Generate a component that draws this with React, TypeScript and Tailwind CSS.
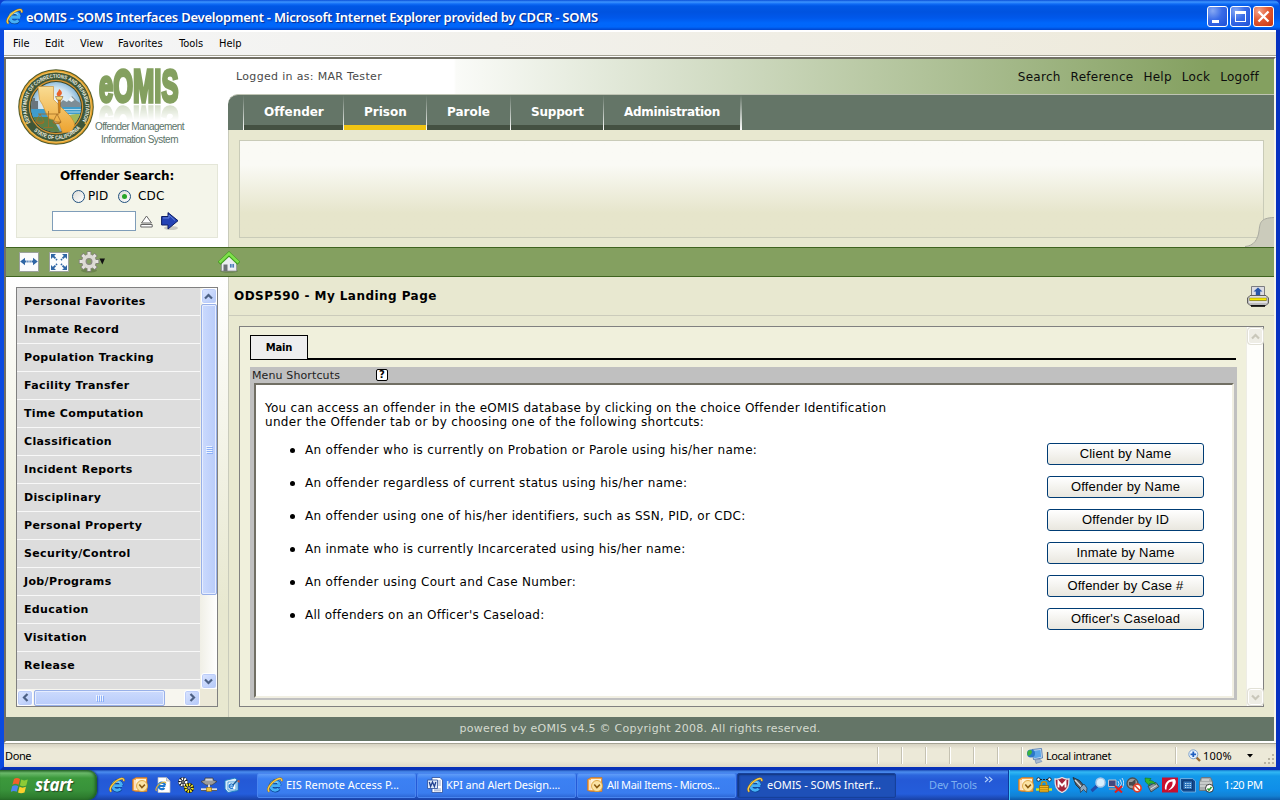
import type { ReactNode } from "react";

const VERDANA = "font-['DejaVu_Sans',sans-serif]";
const TAHOMA = "font-['DejaVu_Sans_Condensed','Noto_Sans',sans-serif]";
const NOTO = "font-['Noto_Sans',sans-serif]";
const ARIAL = "font-['Liberation_Sans',sans-serif]";

/* ---------- icons ---------- */

function IeIcon({ className = "size-4" }: { className?: string }) {
  return (
    <svg viewBox="0 0 16 16" className={`shrink-0 ${className}`}>
      <path d="M13 8.700H5M12.600 8.400A4.500 4.500 0 1 0 11.800 11.500" fill="none" stroke="#0b4597" strokeWidth="4" />
      <path d="M13.200 8.600H5M12.600 8.200A4.500 4.500 0 1 0 11.600 11.600" fill="none" stroke="#46b0f6" strokeWidth="2.900" />
      <path d="M4.600 7.200C5.600 5 9.500 4.200 11 6.200" fill="none" stroke="#b5e4ff" strokeWidth=".8" />
      <path d="M2.300 14.600C-.8 12.400 3.600 6 8.400 3.200 12 1 15.600.6 14.600 4.200" fill="none" stroke="#9a6a12" strokeWidth="2.100" />
      <path d="M2.300 14.600C-.8 12.400 3.600 6 8.400 3.200 12 1 15.600.6 14.600 4.200" fill="none" stroke="#f8cf4a" strokeWidth="1.300" />
    </svg>
  );
}

function OutlookIcon({ className = "size-4" }: { className?: string }) {
  return (
    <svg viewBox="0 0 16 16" className={`shrink-0 ${className}`}>
      <path d="M.5 2.500 4 .5h11v14H4l-3.500-1z" fill="#f7a648" stroke="#c9701a" strokeWidth=".6" />
      <path d="M4 2h10v11H4z" fill="#fff3d8" />
      <path d="M3 3v10" stroke="#fff" strokeWidth="1.300" />
      <circle cx="10" cy="9" r="5.500" fill="#fbe3a4" stroke="#d99a2b" strokeWidth=".8" />
      <path d="m7.300 7.600 2.600 3 3-3" fill="none" stroke="#8a5a12" strokeWidth="1.500" />
    </svg>
  );
}

function PageIeIcon() {
  return (
    <svg viewBox="0 0 16 16" className="size-4 shrink-0">
      <path d="M3 .5h8.500l3.500 3.500v11.500H3z" fill="#fff" stroke="#b9b9b9" strokeWidth=".7" />
      <path d="M11.500.5v3.500H15" fill="#ddd" stroke="#999" strokeWidth=".6" />
      <path d="M10.300 9H4.500m5.600-.6A3.300 3.300 0 1 0 9.400 11" fill="none" stroke="#1f78d1" strokeWidth="2.200" />
      <path d="M1.500 14C-.3 12 3 7 7 5.500c2.500-1 4-.6 3.700.8" fill="none" stroke="#e9b52f" strokeWidth="1.100" />
    </svg>
  );
}

function GearsIcon() {
  return (
    <svg viewBox="0 0 16 16" className="size-4 shrink-0">
      <circle cx="5" cy="5" r="3.300" fill="none" stroke="#111" strokeWidth="3" />
      <circle cx="5" cy="5" r="3" fill="none" stroke="#fff" strokeWidth="3" strokeDasharray="1.500 1" />
      <circle cx="5" cy="5" r="1.300" fill="#eee" stroke="#111" strokeWidth="1" />
      <circle cx="11" cy="11" r="3.600" fill="none" stroke="#111" strokeWidth="3" />
      <circle cx="11" cy="11" r="3.300" fill="none" stroke="#f5e61e" strokeWidth="2.800" strokeDasharray="1.500 1" />
      <circle cx="11" cy="11" r="1.300" fill="#fff" stroke="#111" strokeWidth=".8" />
    </svg>
  );
}

function NetDriveIcon() {
  return (
    <svg viewBox="0 0 16 16" className="size-4 shrink-0">
      <path d="M0 4.500 4 3V1h8v2l4 1.500L11 8H5z" fill="#9b9b9b" stroke="#3d3d3d" strokeWidth=".7" />
      <path d="M4.500 1.800h7v1.800h-7z" fill="#d8d8d8" />
      <path d="M8 7.500v4" stroke="#ddd" strokeWidth="2" />
      <path d="M0 12.500h16" stroke="#ddd" strokeWidth="2.400" />
      <path d="M0 13.500h16" stroke="#444" strokeWidth=".8" />
      <path d="M5.500 10.500h5v4h-5z" fill="#f1c33c" stroke="#8d6a0c" strokeWidth=".6" />
    </svg>
  );
}

function DesktopIcon() {
  return (
    <svg viewBox="0 0 16 16" className="size-4 shrink-0">
      <path d="m1 3.500 10-2.500 3 2.500v10L4 15.500 1 12z" fill="#d7ecfb" stroke="#1f7fc4" />
      <path d="M4 5h8v8H4z" fill="#fff" stroke="#2a8bd0" strokeWidth=".8" />
      <path d="M9.800 9.200H6.100M9.600 8.800A2.200 2.200 0 1 0 9 10.700" fill="none" stroke="#1f78d1" strokeWidth="1.300" />
      <path d="m9 8 4.500-5" stroke="#165a9a" strokeWidth="1.400" />
      <path d="m13 4 2.500-1v3z" fill="#d4522a" />
    </svg>
  );
}

function WordIcon() {
  return (
    <svg viewBox="0 0 16 16" className="size-4 shrink-0">
      <path d="M5 .5h8l2.500 2.500v12.500H5z" fill="#fff" stroke="#2c4f9b" strokeWidth=".8" />
      <path d="M10 4h4M11 6h3M11 8h3M7 12h7M7 13.800h7" stroke="#7890c4" strokeWidth=".8" />
      <path d="M.5 3h10v8.500H.5z" fill="#dfe9fa" stroke="#2c4f9b" strokeWidth=".8" />
      <path d="m2.300 5 1.300 4.500L5.500 5l1.900 4.500L8.800 5" fill="none" stroke="#21418f" strokeWidth="1.300" />
    </svg>
  );
}

function SealIcon() {
  return (
    <svg viewBox="0 0 76 76" className="size-[76px] shrink-0">
      <defs>
        <radialGradient id="sky" cx=".5" cy=".45" r=".6">
          <stop offset="0" stopColor="#f4fafc" />
          <stop offset=".55" stopColor="#cfe4f1" />
          <stop offset="1" stopColor="#4f93c6" />
        </radialGradient>
        <linearGradient id="state" x1="0" y1="0" x2="0" y2="1">
          <stop offset="0" stopColor="#f9dc93" />
          <stop offset="1" stopColor="#eda32f" />
        </linearGradient>
        <clipPath id="disc">
          <circle cx="38" cy="38" r="25" />
        </clipPath>
        <path id="arcTop" d="M12.500 53.500A29.600 29.600 0 1 1 63.500 53.500" />
        <path id="arcBottom" d="M12.500 58A32.400 32.400 0 0 0 63.500 58" />
      </defs>
      <circle cx="38" cy="38" r="37.800" fill="#4d5b2b" />
      <circle cx="38" cy="38" r="36.800" fill="#e39a2a" />
      <circle cx="38" cy="38" r="35.700" fill="#f1c257" />
      <circle cx="38" cy="38" r="34.600" fill="#3f5638" />
      <circle cx="38" cy="38" r="27.200" fill="#d79432" />
      <circle cx="38" cy="38" r="26" fill="#3a4a2c" />
      <circle cx="38" cy="38" r="25" fill="url(#sky)" />
      <g clipPath="url(#disc)">
        <path d="m40 36 5-5 4 2 5-6 5 5 8 5v3H40z" fill="#7d8d96" />
        <path d="m50 31 3-3.500 3.500 3.500-3 2z" fill="#eef3f5" />
        <path d="M11 33h3v-4h3v3h3v9h-9z" fill="#68757c" />
        <path d="M11 40h20v9H11zm32-2h22v9H43z" fill="#3f9ccb" />
        <path d="M44 40.500h20M46 43h18M47 45.500h16" stroke="#cfe9f4" strokeWidth=".8" />
        <path d="M10 48h24l10 18H10z" fill="#5d8045" />
        <path d="M46 48c6-3 12-3 19-3v8l-9 4z" fill="#a3b95a" />
      </g>
      <path d="M20 17.500h15.500v13l17 17c2 3 4.500 6 4 9l-3 6.500-9 .7-3-8-6-5-4-1c-4-5-5-10-7-14l-3-5z" fill="url(#state)" stroke="#c98a28" strokeWidth=".6" />
      <path d="M40 31h2.600l-.6 13h-1.400z" fill="#d8861b" stroke="#7c4a13" strokeWidth=".4" />
      <path d="M37.500 27.500h7.500l-1.500 3.500h-4.500z" fill="#f5d97c" stroke="#7c4a13" strokeWidth=".5" />
      <path d="M41 20c4 3 3.500 5 1 7h-2.500c-2.500-3 1.500-4 1.500-7z" fill="#e8632a" />
      <g fill="none" stroke="#a36c24" strokeWidth=".8">
        <path d="M20 45h21M30.500 42v16M26 58.500h9M22 45l-4 8h8zM39 45l-4 8h8z" />
        <path d="M18 53q4 3.500 8 0M35 53q4 3.500 8 0" strokeWidth="1.200" />
      </g>
      <g fill="#eef0e2" fontFamily="Liberation Sans, sans-serif" fontWeight="700">
        <text fontSize="5.400">
          <textPath href="#arcTop" textLength="122" lengthAdjust="spacingAndGlyphs">DEPARTMENT OF CORRECTIONS AND REHABILITATION</textPath>
        </text>
        <text fontSize="5.600">
          <textPath href="#arcBottom" startOffset="5" textLength="52" lengthAdjust="spacingAndGlyphs">STATE OF CALIFORNIA</textPath>
        </text>
      </g>
      <circle cx="8.500" cy="54" r="1" fill="#e9b13c" />
      <circle cx="67.500" cy="54" r="1" fill="#e9b13c" />
    </svg>
  );
}

function ArrowTile({ four = false }: { four?: boolean }) {
  return (
    <svg viewBox="0 0 20 20" className="size-5 shrink-0">
      <path d="M.5.5h19v19H.5z" fill="#fbfcfd" stroke="#9aa19b" />
      {four ? (
        <g fill="#2f66a5" stroke="#2f66a5">
          <path d="m4 4 4 4M16 4l-4 4M4 16l4-4M16 16l-4-4" strokeWidth="1.800" strokeDasharray="3.500 .8" />
          <path d="M2 2h5L2 7zM18 2h-5l5 5zM2 18h5l-5-5zM18 18h-5l5-5z" stroke="none" />
        </g>
      ) : (
        <g fill="#2f66a5" stroke="#2f66a5">
          <path d="M5 9.500h4.500M15 9.500h-4.500" strokeWidth="2" strokeDasharray="2.500 .8" />
          <path d="M1.200 9.500 6 5.800v7.400zM18.800 9.500 14 5.800v7.400z" stroke="none" />
        </g>
      )}
    </svg>
  );
}

function GearMenuIcon() {
  return (
    <svg viewBox="0 0 28 22" className="h-[22px] w-7 shrink-0">
      <ellipse cx="11" cy="19.500" rx="8" ry="2" fill="#5a7340" opacity=".6" />
      <g stroke="#807f78" strokeWidth="4.600">
        <path d="M11 .3v20.400M.8 10.500h20.400M3.800 3.300l14.400 14.400M18.200 3.300 3.800 17.700" />
      </g>
      <circle cx="11" cy="10.500" r="7.600" fill="#807f78" />
      <g stroke="#e4e3de" strokeWidth="3">
        <path d="M11 1.100v18.800M1.600 10.500h18.800M4.400 3.900l13.200 13.200M17.600 3.900 4.400 17.100" />
      </g>
      <circle cx="11" cy="10.500" r="6.900" fill="#dddbd5" />
      <circle cx="11" cy="10.500" r="2.900" fill="#84a060" stroke="#8b8a82" strokeWidth="1.200" />
      <path d="M21.500 7.500h5.500l-2.700 6z" fill="#111" />
    </svg>
  );
}

function HomeIcon() {
  return (
    <svg viewBox="0 0 22 22" className="size-[22px] shrink-0">
      <ellipse cx="11" cy="20" rx="9" ry="1.800" fill="#5f7b45" opacity=".7" />
      <path d="M3.500 10.500 11 4l7.500 6.500v9.500h-15z" fill="#ededf0" stroke="#8f8f98" strokeWidth=".8" />
      <path d="M5.500 13.500h4V20h-4z" fill="#6d7175" />
      <path d="M11.500 12.500h5v4.500h-5z" fill="#4f7eb7" stroke="#fff" strokeWidth=".7" />
      <path d="M14 12.500v4.500" stroke="#fff" strokeWidth=".6" />
      <path d="m1.200 12.300 9.800-9.300 9.800 9.300" fill="none" stroke="#3d9c1a" strokeWidth="4.200" />
      <path d="m1.500 11.500 9.500-9 9.500 9" fill="none" stroke="#7fe04c" strokeWidth="2.600" />
    </svg>
  );
}

function PrinterIcon() {
  return (
    <svg viewBox="0 0 22 21" className="h-[21px] w-[22px] shrink-0">
      <path d="M4.500.5h13v11h-13z" fill="#dcdce2" stroke="#7d7d80" />
      <path d="m11 1.500 4.500 4h-2.300v3.500H8.800V5.500H6.500z" fill="#2a56a8" />
      <path d="M3 9.500h16l2.500 2.500v5L19 19.500H3L.5 17v-5z" fill="#bdbdbd" stroke="#5e5e5e" />
      <path d="M3 11h16" stroke="#f4f4f4" strokeWidth="1.200" />
      <path d="M2.500 13.300h17" stroke="#8a8200" strokeWidth="3" />
      <path d="M3 13.200h16" stroke="#f8e800" strokeWidth="1.800" />
      <path d="M2 16h18" stroke="#ededed" strokeWidth="1.500" />
      <path d="M4 20h14" stroke="#000" strokeWidth="1.600" />
    </svg>
  );
}

function StartFlag() {
  return (
    <svg viewBox="0 0 18 17" className="h-[17px] w-[18px] shrink-0">
      <path d="M3 2c2-1.500 4-1.200 6 0L7.600 7.700c-2-1.200-4-1.400-6.200 0z" fill="#f2602b" />
      <path d="M10.200 2.600c2 1.100 4 1.100 6.600 0L15.300 8.400c-2.400 1-4.300 1-6.400-.1z" fill="#8ccb36" />
      <path d="M1.200 9.200c2-1.400 4-1.200 6 0l-1.500 5.600c-2-1.200-4-1.200-6 0z" fill="#4c86f0" />
      <path d="M8.500 9.800c2 1.100 4 1.100 6.500 0l-1.500 5.600c-2.400 1-4.400 1-6.500 0z" fill="#fbd02d" />
    </svg>
  );
}

function Chevron({ dir, className = "text-[#4d6185]" }: { dir: "up" | "down" | "left" | "right"; className?: string }) {
  const d = {
    up: "m1 6.500 3.500-3.500 3.500 3.500",
    down: "m1 2.500 3.500 3.500L8 2.500",
    left: "M6.500 1 3 4.500 6.500 8",
    right: "M2.500 1 6 4.500 2.500 8",
  }[dir];
  return (
    <svg viewBox="0 0 9 9" className={`size-[9px] ${className}`}>
      <path d={d} fill="none" stroke="currentColor" strokeWidth="2.200" />
    </svg>
  );
}

const trayIcons: ReactNode[] = [
  <OutlookIcon key="mail" />,
  <svg key="lock" viewBox="0 0 16 16" className="size-4">
    <circle cx="2.500" cy="2.500" r="1.700" fill="#fff" stroke="#111" strokeWidth=".8" />
    <circle cx="13.500" cy="2.500" r="1.700" fill="#fff" stroke="#111" strokeWidth=".8" />
    <path d="M4 2.500h8" stroke="#222" strokeDasharray="2 1" />
    <path d="M0 12.500h16" stroke="#cfe822" strokeWidth="2.400" />
    <path d="M5.500 9V7c0-3 5-3 5 0v2" fill="none" stroke="#c9920f" strokeWidth="1.600" />
    <path d="M3.500 8.500h9V15h-9z" fill="#f2b61f" stroke="#8a6208" strokeWidth=".7" />
    <path d="M4 10.500h8M4 12.800h8" stroke="#9d730f" strokeWidth=".7" />
  </svg>,
  <svg key="shield" viewBox="0 0 16 16" className="size-4">
    <path d="M1 2c3 .5 5-.3 7-1.500C10 1.700 12 2.500 15 2c0 7-1 11-7 13.500C2 13 1 9 1 2z" fill="#a3253b" stroke="#e8e0e2" strokeWidth="1.300" />
    <path d="M4.500 10.500V4.500L8 8.500l3.500-4v6" fill="none" stroke="#fff" strokeWidth="1.900" />
  </svg>,
  <svg key="rocket" viewBox="0 0 16 16" className="size-4">
    <path d="m1 .5 6.500 3 6 7-3.500 3.500-6-6z" fill="#545b62" stroke="#20262c" strokeWidth=".8" />
    <path d="m3 3 6.500 7" stroke="#d3d8dc" strokeWidth="1.500" />
    <path d="m12 7 3 4-.5 4.500-3-3-3 3-.5-4.500z" fill="#8ea6bb" stroke="#273746" strokeWidth=".7" />
  </svg>,
  <svg key="search" viewBox="0 0 16 16" className="size-4">
    <path d="m1.500 14 5.500-5" stroke="#224dab" strokeWidth="3.200" />
    <circle cx="10.500" cy="5.500" r="4.500" fill="#d9effd" stroke="#a9c6e6" strokeWidth="1.500" />
  </svg>,
  <svg key="wireless" viewBox="0 0 16 16" className="size-4">
    <path d="M.5 3h7.500v6.500H.5z" fill="#44487e" stroke="#c0c3cf" />
    <path d="M1 12h7" stroke="#8a8d94" strokeWidth="2" />
    <path d="M10 4q2 3 0 5M12 2.500q3 4 0 7.500M14 1q3.500 5 0 10" fill="none" stroke="#dcebf6" strokeWidth=".9" />
    <path d="m7 9 7 6.500M14 9l-7 6.500" stroke="#e61c1c" strokeWidth="2" />
  </svg>,
  <svg key="volume" viewBox="0 0 16 16" className="size-4">
    <circle cx="6.500" cy="6.500" r="5.500" fill="#9a9a9a" stroke="#4e4e4e" strokeWidth="1.300" />
    <path d="M3 5h3l3.500-3v9L6 8.500H3z" fill="#48494c" />
    <circle cx="11.300" cy="11" r="3.800" fill="#fff" stroke="#e0402a" strokeWidth="1.700" />
    <path d="m8.800 8.500 5 5" stroke="#e0402a" strokeWidth="1.600" />
  </svg>,
  <svg key="eject" viewBox="0 0 16 16" className="size-4">
    <path d="m4 9 8-3.500 3 4-8 5.500z" fill="#8c949c" stroke="#31383f" strokeWidth=".8" />
    <path d="m6.500 12 6-3.500" stroke="#dfe3e7" />
    <path d="m1 1 6 .5L5.500 3.500c3 0 5 1 6 4-2-1.500-4-1.500-6-1L6 9 1.500 5z" fill="#34b52b" stroke="#0f6a10" strokeWidth=".5" />
  </svg>,
  <svg key="red" viewBox="0 0 16 16" className="size-4">
    <path d="M0 .5h16v15H0z" fill="#c8102e" />
    <path d="M3 12.500C2 6 6 2 12.500 2c3.500 3-.5 10-6.500 11.500 3.500-3 5-5.500 4.500-9C6.500 4.500 4.500 8 4.500 12.500z" fill="#fff" />
  </svg>,
  <svg key="chip" viewBox="0 0 16 16" className="size-4">
    <path d="M.5 1.500h12l3 2.500v11H3L.5 12z" fill="#114a8f" stroke="#7fb9e8" strokeWidth=".8" />
    <path d="M3 4h9.500v8.500H3z" fill="#2e74bd" stroke="#0a2a5c" strokeWidth=".7" />
    <path d="M5 6.500h6M5 8.500h6M5 10.500h6" stroke="#c4e3f8" strokeDasharray="1.300 1" />
  </svg>,
  <svg key="drive" viewBox="0 0 16 16" className="size-4">
    <path d="m1.500 5 2-4.500h9l2 4.500v8.500h-13z" fill="#a9acad" stroke="#6b6e70" strokeWidth=".8" />
    <path d="M2 6h12M4 3h7M2 9h8" stroke="#e7e9e9" strokeWidth="1.200" />
    <circle cx="11.500" cy="11.300" r="4" fill="#fff" stroke="#222" strokeWidth=".9" />
    <path d="m9.500 11.500 1.500 1.800 2.500-3.300" fill="none" stroke="#2a9b2a" strokeWidth="1.500" />
  </svg>,
];

/* ---------- window chrome ---------- */

function TitleBar() {
  const box = "flex size-[21px] items-center justify-center rounded-[3px] border border-white";
  const blue = "bg-[radial-gradient(circle_at_25%_20%,#86a8f3_0%,#3a6ce8_45%,#1c4fd6_100%)]";
  return (
    <div className="flex h-[30px] shrink-0 items-center rounded-t-[7px] bg-[linear-gradient(#0a4fd8_0px,#3d95ff_2px,#0f6bf5_4px,#0058e6_6px,#0053e0_12px,#0058eb_18px,#0067fb_23px,#0066fa_27px,#0044cc_30px)] pl-[6px] pr-[6px] pt-[3px]">
      <IeIcon className="size-[17px]" />
      <span className="ml-[3px] whitespace-nowrap font-['Noto_Sans',sans-serif] text-[13px] font-semibold leading-[18px] tracking-[-0.232px] text-white [text-shadow:1px_1px_1px_#0a2a8c]">
        eOMIS - SOMS Interfaces Development - Microsoft Internet Explorer provided by CDCR - SOMS
      </span>
      <div className="ml-auto flex gap-[2px]">
        <div className={`${box} ${blue}`}>
          <div className="mr-[4px] mt-[9px] h-[3px] w-[7px] bg-white" />
        </div>
        <div className={`${box} ${blue}`}>
          <div className="h-[11px] w-[11px] border border-t-[3px] border-white" />
        </div>
        <div className={`${box} bg-[radial-gradient(circle_at_25%_20%,#f3a58c_0%,#e35a33_45%,#c8340f_100%)]`}>
          <svg viewBox="0 0 13 13" className="size-[13px]">
            <path d="m1.500 1.500 10 10M11.500 1.500l-10 10" stroke="#fff" strokeWidth="2.300" />
          </svg>
        </div>
      </div>
    </div>
  );
}

function MenuBar() {
  return (
    <div className={`flex h-[26px] shrink-0 items-center border-b border-[#a5a394] border-t-2 border-t-white bg-linear-to-r from-[#f5f6f8] to-[#ede9d9] pl-[9px] pt-px text-[11px] leading-[14px] text-black ${TAHOMA}`}>
      <span className="w-8">File</span>
      <span className="w-[35px]">Edit</span>
      <span className="w-[38px]">View</span>
      <span className="w-[61px]">Favorites</span>
      <span className="w-10">Tools</span>
      <span>Help</span>
    </div>
  );
}

/* ---------- application header ---------- */

function Logo() {
  return (
    <div className="flex pl-3 pt-[10px]">
      <SealIcon />
      <div className="w-[94px]">
        <div className="h-[51px] w-[86px] pl-[5px]">
          <span
            className={`block h-[35px] w-[148px] origin-top-left scale-x-[.555] whitespace-nowrap text-[46px] font-bold leading-[35px] text-[#84a060] [-webkit-text-stroke:3.500px_#84a060] [-webkit-box-reflect:below_1px_linear-gradient(transparent_55%,rgba(0,0,0,.35))] ${ARIAL}`}
          >
            eOMIS
          </span>
        </div>
        <div className={`flex flex-col whitespace-nowrap pl-px text-[10px] leading-[13px] text-[#5b7368] ${ARIAL}`}>
          <span className="tracking-[-0.573px]">Offender Management</span>
          <span className="pl-[6px] tracking-[-0.509px]">Information System</span>
        </div>
      </div>
    </div>
  );
}

function Radio({ checked = false }: { checked?: boolean }) {
  return (
    <span className="flex size-[13px] items-center justify-center rounded-full border border-[#21517f] bg-linear-to-br from-[#dcdcd7] to-white">
      {checked && <span className="size-[5px] rounded-full bg-[#27a627]" />}
    </span>
  );
}

function OffenderSearch() {
  return (
    <div className={`ml-[10px] flex h-[74px] w-[202px] flex-col border border-[#e4e6d8] bg-[#f4f5ea] text-xs text-black ${VERDANA}`}>
      <div className="mt-1 h-[14px] pl-[43px] font-bold leading-[14px] tracking-[-0.08px]">Offender Search:</div>
      <div className="mt-[6px] flex h-[14px] items-center pl-[55px]">
        <Radio />
        <span className="ml-[3px] w-[30px] tracking-[0.1px]">PID</span>
        <Radio checked />
        <span className="ml-[7px] tracking-[0.2px]">CDC</span>
      </div>
      <div className="mt-[8px] flex h-5 items-center pl-[35px]">
        <div className="h-5 w-[84px] border border-[#7f9db9] bg-white" />
        <svg viewBox="0 0 13 13" className="ml-1 size-[13px]">
          <path d="m6.500 1 5 7h-10z" fill="#fff" stroke="#666" />
          <path d="M.8 9.500h11.400V12H.8z" fill="#fff" stroke="#666" />
        </svg>
        <svg viewBox="0 0 18 18" className="ml-[8px] size-[18px]">
          <ellipse cx="10" cy="16" rx="7" ry="2" fill="#c9c9c2" />
          <path d="M.6 4.500h6.400V.6L17 8.700 7 17v-4H.6z" fill="#2443b5" stroke="#0c1d66" />
          <path d="M2 6h6V3l6 5.500" fill="none" stroke="#6683dc" />
        </svg>
      </div>
    </div>
  );
}

const tabs = [
  { label: "Offender", cls: "w-[100px] pl-5 tracking-[-0.03px]", active: false },
  { label: "Prison", cls: "w-[83px] pl-5", active: true },
  { label: "Parole", cls: "w-[84px] pl-5", active: false },
  { label: "Support", cls: "w-[93px] pl-5 tracking-[-0.2px]", active: false },
  { label: "Administration", cls: "w-[137px] pl-5 tracking-[-0.335px]", active: false },
];

function Separator({ wide = false }: { wide?: boolean }) {
  return <div className={`bg-linear-to-b from-[#647567] to-white ${wide ? "w-[2px]" : "w-px"}`} />;
}

function NavTabs() {
  return (
    <div className={`flex h-[36px] shrink-0 rounded-tl-[10px] border-t border-[#bfc4b4] bg-[#647567] pl-[15px] text-xs font-bold text-white ${VERDANA}`}>
      {tabs.map((t) => (
        <div key={t.label} className="flex">
          <Separator />
          <div className={`-mr-px flex items-center border-b-[5px] pt-1 leading-[14px] ${t.active ? "border-[#f0c413]" : "border-[#445142]"} ${t.cls}`}>
            {t.label}
          </div>
        </div>
      ))}
      <Separator wide />
    </div>
  );
}

function HeaderRight() {
  return (
    <div className="flex min-w-0 flex-1 flex-col">
      <div className={`flex h-[35px] items-center bg-[linear-gradient(to_right,#fff_0px,#fff_226px,#fafbf8_228px,#84a060_980px)] pl-2 pr-[15px] ${VERDANA}`}>
        <span className="pt-px text-[11px] tracking-[0.326px] text-[#4a4a4a]">Logged in as: MAR Tester</span>
        <div className="ml-auto flex gap-[10px] text-xs tracking-[0.26px] text-[#0d0d0d]">
          <span>Search</span>
          <span>Reference</span>
          <span>Help</span>
          <span>Lock</span>
          <span>Logoff</span>
        </div>
      </div>
      <NavTabs />
      <div className="relative flex-1 border-l border-[#c9cbbb] bg-[#e8e8d0] px-[10px] pt-[10px]">
        <div className="h-[98px] border border-[#c9cbb8] bg-linear-to-b from-[#fafaf5] from-25% to-[#e6e5cb] to-75%" />
        <svg viewBox="0 0 29 30" className="absolute right-0 bottom-0 h-[30px] w-[29px]">
          <path d="M29 0C15 1 15 6 14 14 13 22 9 29 0 30h29z" fill="#cbcbbb" />
          <path d="M29 .5C15 1 15 6 14 14 13 22 9 29 0 29.500" fill="none" stroke="#a9aaa0" />
        </svg>
      </div>
    </div>
  );
}

/* ---------- sidebar ---------- */

const menu = [
  "Personal Favorites", "Inmate Record", "Population Tracking", "Facility Transfer", "Time Computation",
  "Classification", "Incident Reports", "Disciplinary", "Personal Property", "Security/Control",
  "Job/Programs", "Education", "Visitation", "Release",
];

function ScrollButton({ dir }: { dir: "up" | "down" | "left" | "right" }) {
  return (
    <div className="flex size-4 shrink-0 items-center justify-center rounded-[3px] border border-white bg-linear-to-br from-[#dbe5ff] to-[#b3c8f8] shadow-[inset_0_0_0_1px_#bccdf9]">
      <Chevron dir={dir} />
    </div>
  );
}

function Sidebar() {
  return (
    <aside className="w-[222px] shrink-0 bg-linear-to-b from-white to-[#e8e8d0] to-75% pl-[10px] pt-[10px]">
      <div className="flex h-[420px] w-[202px] flex-col border border-[#808080] bg-[#ece9d8]">
        <div className="flex h-[401px]">
          <div className={`w-[183px] overflow-hidden bg-[#ddd] text-[11px] font-bold tracking-[0.355px] text-black ${VERDANA}`}>
            {menu.map((m) => (
              <div key={m} className="flex h-7 items-center whitespace-nowrap border-b border-white/80 pl-[7px] pt-[2px]">{m}</div>
            ))}
          </div>
          <div className="flex w-[17px] flex-col items-center bg-linear-to-r from-[#f0efe6] to-white">
            <ScrollButton dir="up" />
            <div className="flex h-[291px] w-4 flex-col items-center justify-center gap-px rounded-[2px] border border-[#98b0e8] bg-linear-to-r from-[#cbdafd] to-[#b9ccfa] shadow-[inset_0_0_0_1px_#e6edff]">
              {[0, 1, 2, 3].map((n) => <div key={n} className="h-px w-[6px] bg-[#eef4fe] shadow-[1px_1px_0_#8cb0f8]" />)}
            </div>
            <div className="mt-auto">
              <ScrollButton dir="down" />
            </div>
          </div>
        </div>
        <div className="flex h-[17px] w-[183px] items-center bg-[#f7f6ef]">
          <ScrollButton dir="left" />
          <div className="ml-px flex h-4 w-[131px] items-center justify-center gap-px rounded-[2px] border border-[#98b0e8] bg-linear-to-b from-[#cbdafd] to-[#b9ccfa] shadow-[inset_0_0_0_1px_#e6edff]">
            {[0, 1, 2, 3].map((n) => <div key={n} className="h-[6px] w-px bg-[#eef4fe] shadow-[1px_1px_0_#8cb0f8]" />)}
          </div>
          <div className="ml-auto">
            <ScrollButton dir="right" />
          </div>
        </div>
      </div>
    </aside>
  );
}

/* ---------- landing page ---------- */

const shortcuts = [
  { text: "An offender who is currently on Probation or Parole using his/her name:", cls: "tracking-[0.324px]", button: "Client by Name" },
  { text: "An offender regardless of current status using his/her name:", cls: "tracking-[0.324px]", button: "Offender by Name" },
  { text: "An offender using one of his/her identifiers, such as SSN, PID, or CDC:", cls: "tracking-[0.296px]", button: "Offender by ID" },
  { text: "An inmate who is currently Incarcerated using his/her name:", cls: "tracking-[0.282px]", button: "Inmate by Name" },
  { text: "An offender using Court and Case Number:", cls: "tracking-[0.31px]", button: "Offender by Case #" },
  { text: "All offenders on an Officer's Caseload:", cls: "tracking-[0.255px]", button: "Officer's Caseload" },
];

function DisabledScroll({ dir }: { dir: "up" | "down" }) {
  return (
    <div className="flex h-4 w-[15px] items-center justify-center rounded-[3px] border border-white bg-[#eeede5] shadow-[0_0_0_1px_#e2e1d6]">
      <Chevron dir={dir} className="text-[#c9c7ba]" />
    </div>
  );
}

function MainPanel() {
  return (
    <main className="flex min-w-0 flex-1 flex-col border-l border-[#c9cbbb] bg-[#e8e8d0]">
      <div className="flex h-[39px] shrink-0 items-center border-b border-[#cbcbbb] pl-[5px] pr-[5px]">
        <span className={`pb-px text-xs font-bold tracking-[0.45px] text-black ${VERDANA}`}>ODSP590 - My Landing Page</span>
        <div className="ml-auto">
          <PrinterIcon />
        </div>
      </div>
      <div className="ml-[10px] mt-[10px] flex h-[381px] w-[1025px] border border-[#808080] bg-[#f0f0dc]">
        <div className={`flex-1 pl-[10px] pt-2 ${VERDANA}`}>
          <div className="flex h-[25px] w-[986px] items-end">
            <div className="flex h-[25px] w-[58px] items-center justify-center border border-black bg-[#eee] text-[10px] font-bold tracking-[-0.2px] text-black">Main</div>
            <div className="h-[2px] flex-1 bg-black" />
          </div>
          <div className="mt-[7px] flex h-[333px] w-[987px] flex-col bg-[#c0c0c0] pb-[2px] pl-1 pr-[3px]">
            <div className="flex h-4 items-center">
              <span className="-ml-[2px] w-[124px] pt-[2px] text-[11px] tracking-[0.123px] text-[#222]">Menu Shortcuts</span>
              <span className="flex size-3 items-center justify-center rounded-[2px] border border-black bg-white text-[10px] font-bold leading-none text-black">?</span>
            </div>
            <div className="flex-1 border-2 border-b-[#f1efe2] border-l-[#716f64] border-r-[#f1efe2] border-t-[#716f64] bg-white pl-[9px] text-xs text-black">
              <p className="mt-[16px] whitespace-nowrap leading-[14px]">
                <span className="tracking-[0.266px]">You can access an offender in the eOMIS database by clicking on the choice Offender Identification</span>
                <br />
                <span className="tracking-[0.313px]">under the Offender tab or by choosing one of the following shortcuts:</span>
              </p>
              <ul className="mt-[14px]">
                {shortcuts.map((s) => (
                  <li key={s.button} className="flex h-[33px] items-start pl-[25px]">
                    <span className="mt-[5px] size-[5px] rounded-full bg-black" />
                    <span className={`ml-[10px] whitespace-nowrap leading-[14px] ${s.cls}`}>{s.text}</span>
                    <button className={`ml-auto mr-[28px] h-[22px] w-[157px] rounded-[3px] border border-[#003c74] bg-linear-to-b from-white to-[#e9e7df] pb-[2px] text-[13px] leading-none tracking-[0.2px] text-black ${ARIAL}`}>
                      {s.button}
                    </button>
                  </li>
                ))}
              </ul>
            </div>
          </div>
        </div>
        <div className="flex w-[17px] flex-col items-center justify-between border-l border-[#eeede5] bg-[#fefefb] py-px">
          <DisabledScroll dir="up" />
          <DisabledScroll dir="down" />
        </div>
      </div>
    </main>
  );
}

/* ---------- status bar and taskbar ---------- */

function StatusBar() {
  return (
    <div className={`flex h-[24px] shrink-0 items-center border-t border-[#a5a394] bg-[linear-gradient(#d6d2c2_0px,#ece9d8_5px,#ece9d8_17px,#dcd8c6_24px)] text-[11px] text-black ${NOTO}`}>
      <span className="w-[873px] pl-px pt-px tracking-[-0.4px]">Done</span>
      {[0, 1, 2, 3, 4, 5].map((n) => (
        <div key={n} className="h-[17px] w-6 border-l border-[#c5c2b2] shadow-[inset_1px_0_0_#fff]" />
      ))}
      <div className="flex h-[17px] w-[154px] items-center border-l border-[#c5c2b2] pl-[5px] shadow-[inset_1px_0_0_#fff]">
        <svg viewBox="0 0 16 16" className="size-4">
          <path d="M5 1.500 14.500.5l1 9.500-9 1.500z" fill="#cfe0f3" stroke="#3c6dad" strokeWidth=".8" />
          <path d="m6.200 2.800 7.300-.8.700 7-7 1.200z" fill="#5aa5e8" />
          <path d="m8 12 5-.8 2 2.300-6 2z" fill="#a9bbd4" stroke="#5475a5" strokeWidth=".5" />
          <circle cx="4" cy="5.500" r="4" fill="#2b78c8" />
          <path d="M1 3c2-2 4-1 4 1S2.500 7 1.500 8C0 7 0 4.500 1 3z" fill="#3db53d" />
        </svg>
        <span className="ml-[3px] pt-px tracking-[-0.404px]">Local intranet</span>
      </div>
      <div className="flex h-[17px] flex-1 items-center border-l border-[#c5c2b2] pl-[12px] shadow-[inset_1px_0_0_#fff]">
        <svg viewBox="0 0 13 13" className="size-[13px]">
          <path d="m8 8 4 4" stroke="#9a6a35" strokeWidth="2.400" />
          <circle cx="5.300" cy="5.300" r="4.500" fill="#eaf4fe" stroke="#7fa3cc" />
          <path d="M5.300 2.500v5.600M2.500 5.300h5.600" stroke="#1f5fc0" strokeWidth="1.800" />
        </svg>
        <span className="ml-[2px] pt-px tracking-[0.2px]">100%</span>
        <svg viewBox="0 0 6 4" className="ml-[15px] h-1 w-[6px]">
          <path d="M0 0h6L3 3.500z" fill="#000" />
        </svg>
        <svg viewBox="0 0 12 12" className="ml-auto mr-px mt-[6px] size-3">
          <path d="M9 1h2v2H9zM9 5h2v2H9zM5 5h2v2H5zM9 9h2v2H9zM5 9h2v2H5zM1 9h2v2H1z" fill="#b8b4a3" />
        </svg>
      </div>
    </div>
  );
}

const tasks = [
  { label: "EIS Remote Access P...", icon: <IeIcon />, cls: "tracking-[0px]", active: false },
  { label: "KPI and Alert Design....", icon: <WordIcon />, cls: "tracking-[-0.158px]", active: false },
  { label: "All Mail Items - Micros...", icon: <OutlookIcon />, cls: "pl-px tracking-[-0.37px]", active: false },
  { label: "eOMIS - SOMS Interf...", icon: <IeIcon />, cls: "pl-px tracking-[-0.044px]", active: true },
];

function Taskbar() {
  return (
    <div className={`flex h-[30px] shrink-0 bg-[linear-gradient(#1f4fb8_0px,#4b8def_2px,#2c66dd_5px,#2459d6_10px,#245ddb_24px,#1941a5_30px)] text-[11px] text-white ${NOTO}`}>
      <div className="flex w-[97px] items-center rounded-r-[9px] bg-[linear-gradient(#2c6b2c_0px,#6bb96b_3px,#3c993c_8px,#38923a_20px,#2a742a_30px)] pl-[11px] shadow-[inset_-2px_0_3px_#1f5f24,1px_0_2px_#12327f]">
        <StartFlag />
        <span className="ml-[6px] pb-px text-[17px] font-bold italic tracking-[-0.3px] [text-shadow:1px_1px_1px_#244d24]">start</span>
      </div>
      <div className="flex w-[160px] items-center gap-[7px] pl-[12px]">
        <IeIcon />
        <OutlookIcon />
        <PageIeIcon />
        <GearsIcon />
        <NetDriveIcon />
        <DesktopIcon />
      </div>
      <div className="flex items-center gap-px">
        {tasks.map((t) => (
          <div
            key={t.label}
            className={`flex h-[25px] w-[159px] items-center gap-[3px] rounded-[2px] border pl-[9px] ${t.active ? "border-[#16409a] bg-[#1e50b8] shadow-[inset_1px_1px_2px_#123378]" : "border-[#4a86f0] bg-[linear-gradient(#5f9cf8,#3c81f3_5px,#3a7df0_19px,#2e68d6)]"}`}
          >
            {t.icon}
            <span className={`whitespace-nowrap ${t.cls}`}>{t.label}</span>
          </div>
        ))}
      </div>
      <div className="flex flex-1 items-center pl-[33px] text-[#7db0f0]">
        <span className="tracking-[-0.137px]">Dev Tools</span>
        <svg viewBox="0 0 9 7" className="mb-[11px] ml-[7px] h-[7px] w-[9px]">
          <path d="m1 .8 3 2.700L1 6.200M5 .8l3 2.700-3 2.700" fill="none" stroke="#b9d5fb" strokeWidth="1.100" />
        </svg>
      </div>
      <div className="flex w-[272px] items-center gap-[2px] border-l border-[#0b3a9c] bg-[linear-gradient(#1479d0_0px,#32b8f4_2px,#1298ea_6px,#0f8ee8_20px,#1281d4_26px,#0c5cab_30px)] pl-[9px] shadow-[inset_1px_0_0_#3fc4f8]">
        {trayIcons}
        <span className="ml-[8px] whitespace-nowrap tracking-[-0.4px]">1:20 PM</span>
      </div>
    </div>
  );
}

export default function App() {
  return (
    <div className="flex h-[800px] w-[1280px] flex-col overflow-hidden bg-[#0a3fd0]">
      <TitleBar />
      <div className="flex h-[740px] shrink-0 flex-col border-l-4 border-r-4 border-b-4 border-b-[#0831b8] border-l-[#0b4ae0] border-r-[#0631c0]">
        <MenuBar />
        <div className="h-px shrink-0 bg-white" />
        <div className="flex h-[686px] shrink-0 flex-col border-l-2 border-r-2 border-t-2 border-b-2 border-b-white border-l-[#716f64] border-r-[#f4f3ec] border-t-[#716f64]">
          <header className="flex h-[188px] shrink-0 bg-white">
            <div className="flex w-[222px] shrink-0 flex-col justify-between pb-[9px]">
              <Logo />
              <OffenderSearch />
            </div>
            <HeaderRight />
          </header>
          <div className="flex h-[30px] shrink-0 items-center border-y border-[#3f6420] bg-[#84a060] pl-[13px]">
            <ArrowTile />
            <div className="ml-[10px]"><ArrowTile four /></div>
            <div className="ml-[9px]"><GearMenuIcon /></div>
            <div className="ml-[112px]"><HomeIcon /></div>
          </div>
          <div className="flex h-[440px] shrink-0">
            <Sidebar />
            <MainPanel />
          </div>
          <footer className={`flex flex-1 items-center justify-center bg-[#647567] pt-px text-[11px] tracking-[0.268px] text-[#d5dbd0] ${VERDANA}`}>
            powered by eOMIS v4.5 © Copyright 2008. All rights reserved.
          </footer>
        </div>
        <StatusBar />
      </div>
      <Taskbar />
    </div>
  );
}
